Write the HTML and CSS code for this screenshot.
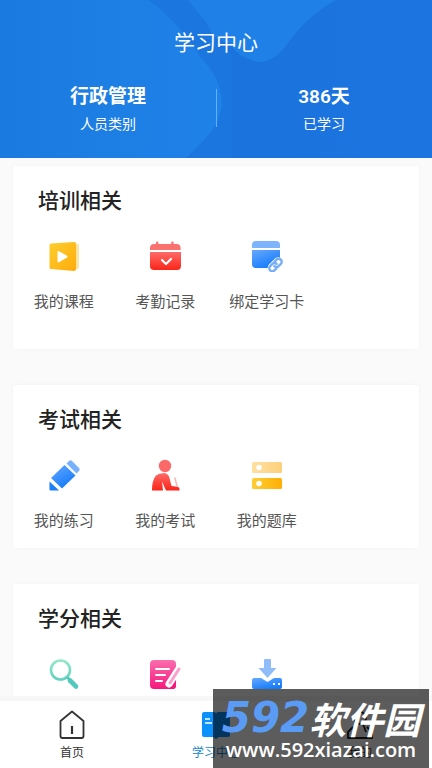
FILE: index.html
```html
<!DOCTYPE html>
<html lang="zh-CN">
<head>
<meta charset="utf-8">
<meta name="viewport" content="width=device-width, initial-scale=1">
<title>学习中心</title>
<link rel="stylesheet" href="styles.css">
</head>
<body>
<div class="app">
  <header class="hero">
    <svg class="hero-art" viewBox="0 0 432 158" preserveAspectRatio="none" aria-hidden="true">
      <defs>
        <linearGradient id="heroL" x1="0" x2="1"><stop offset="0" stop-color="#1b7ae0"/><stop offset="1" stop-color="#1f82e8"/></linearGradient>
        <linearGradient id="heroR" x1="0" x2="1"><stop offset="0" stop-color="#1a72dc"/><stop offset="1" stop-color="#1b74df"/></linearGradient>
      </defs>
      <path fill="url(#heroR)" d="M0 0h432v158H0z"/>
      <path fill="url(#heroL)" d="M0 0H150Q180 24 200 55Q222 76 222 106Q219 126 204 140L188 158H0z"/>
      <path fill="#1f80e7" d="M160 0H336Q308 15 288 43Q275 62 258 62Q240 59 230 44Q198 32 160 0z"/>
      <path fill="#1b76df" d="M148 0H188L206 22L218 45L232 55V158H186L204 140Q222 125 222 102Q220 76 200 57Q182 22 148 0z"/>
    </svg>
    <h1 class="hero-title">学习中心</h1>
    <div class="stats">
      <div class="stat"><strong class="stat-value">行政管理</strong><span class="stat-label">人员类别</span></div>
      <div class="stat"><strong class="stat-value">386天</strong><span class="stat-label">已学习</span></div>
    </div>
  </header>

  <main class="content">
    <section class="card card-tall">
      <h2 class="card-title">培训相关</h2>
      <div class="grid">
        <a class="entry" href="#">
          <svg class="icon" viewBox="0 0 32 32" aria-hidden="true">
            <defs><linearGradient id="gold" x1="0" y1="0" x2="1" y2="1"><stop offset="0" stop-color="#fdce30"/><stop offset="1" stop-color="#ffab0b"/></linearGradient></defs>
            <path fill="#ffe3a0" d="M26 3l4 1q1 .3 1 1.500V27q0 1.500-1 2l-4 1z"/>
            <path fill="url(#gold)" d="M3 3.500L26 2q2 0 2 2v25q0 2-2 2L3 29q-1.500 0-1.500-1.500V5Q1.500 3.500 3 3.500z"/>
            <path fill="#fff" stroke="#fff" stroke-width="2" stroke-linejoin="round" d="M10.500 12v9.500l8-4.800z"/>
          </svg>
          <span>我的课程</span>
        </a>
        <a class="entry" href="#">
          <svg class="icon" viewBox="0 0 32 32" aria-hidden="true">
            <defs><linearGradient id="red" x1="0" y1="0" x2="0" y2="1"><stop offset="0" stop-color="#ff6a68"/><stop offset="1" stop-color="#fb2519"/></linearGradient></defs>
            <path fill="#fb7170" d="M5 4h2V2.500q0-1 1.200-1t1.200 1V4h12.800V2.500q0-1 1.200-1t1.200 1V4h3q4 0 4 4v2H1V8q0-4 4-4z"/>
            <path fill="url(#red)" d="M1 12h31v14q0 4-4 4H5q-4 0-4-4z"/>
            <path fill="none" stroke="#fff" stroke-width="2.200" stroke-linecap="round" stroke-linejoin="round" d="M13 20l4 4 5-5"/>
          </svg>
          <span>考勤记录</span>
        </a>
        <a class="entry" href="#">
          <svg class="icon" viewBox="0 0 32 32" aria-hidden="true">
            <defs><linearGradient id="blue" x1="0" y1="0" x2=".6" y2="1"><stop offset="0" stop-color="#66a9ff"/><stop offset="1" stop-color="#147bfb"/></linearGradient></defs>
            <path fill="#7db4fb" d="M5 1h20q4 0 4 4v3H1V5q0-4 4-4z"/>
            <path fill="url(#blue)" d="M1 10h28v15q0 3-3 3H5q-4 0-4-4z"/>
            <g transform="rotate(-45 24.500 25)" fill="none">
              <rect x="17" y="21.500" width="15" height="7" rx="3.500" fill="#fff" stroke="#fff" stroke-width="3"/>
              <path stroke="#75adf7" stroke-width="2.400" stroke-linecap="round" d="M23 28h-3a3 3 0 0 1 0-6h3a3 3 0 0 1 3 3M26 22h3a3 3 0 0 1 0 6h-3a3 3 0 0 1-3-3"/>
            </g>
          </svg>
          <span>绑定学习卡</span>
        </a>
      </div>
    </section>

    <section class="card">
      <h2 class="card-title">考试相关</h2>
      <div class="grid">
        <a class="entry" href="#">
          <svg class="icon" viewBox="0 0 32 32" aria-hidden="true">
            <path fill="#79b2fc" d="M18.500 4.500L21 2q1.500-1.300 3 0l7 7q1.300 1.500 0 3l-2.500 2.500z"/>
            <path fill="url(#blue)" d="M16.500 6l11 10.500L14 29.500 3 19z"/>
            <path fill="#1b7efa" d="M1.500 22.500L11 31.500H2.500q-1 0-1-1z"/>
          </svg>
          <span>我的练习</span>
        </a>
        <a class="entry" href="#">
          <svg class="icon" viewBox="0 0 32 32" aria-hidden="true">
            <circle cx="16" cy="7" r="6.200" fill="#fb6a68"/>
            <path fill="url(#red)" d="M3 31.500Q3 21 7 16.500Q10 14 15 14q4.500.5 5.500 5l2 8 6 .700q2 .300 2 2v1.800H17l-4-9 1 9z"/>
            <path fill="none" stroke="#fbb5b2" stroke-width="1.500" stroke-linecap="round" d="M26 19l2 8"/>
          </svg>
          <span>我的考试</span>
        </a>
        <a class="entry" href="#">
          <svg class="icon" viewBox="0 0 32 32" aria-hidden="true">
            <defs>
              <linearGradient id="amber" x1="0" x2="1"><stop offset="0" stop-color="#fdce35"/><stop offset="1" stop-color="#feaf04"/></linearGradient>
              <linearGradient id="cream" x1="0" x2="1"><stop offset="0" stop-color="#fee0a0"/><stop offset="1" stop-color="#fdcf7c"/></linearGradient>
            </defs>
            <rect x="1" y="3" width="30" height="11" rx="1.500" fill="url(#cream)"/>
            <rect x="1" y="19" width="30" height="11" rx="1.500" fill="url(#amber)"/>
            <circle cx="8" cy="8.500" r="2.800" fill="#fff"/><circle cx="8" cy="24.500" r="2.800" fill="#fff"/>
          </svg>
          <span>我的题库</span>
        </a>
      </div>
    </section>

    <section class="card">
      <h2 class="card-title">学分相关</h2>
      <div class="grid">
        <a class="entry" href="#" aria-label="学分查询">
          <svg class="icon" viewBox="0 0 32 32" aria-hidden="true">
            <defs><linearGradient id="mint" x1="0" y1="0" x2="0" y2="1"><stop offset="0" stop-color="#91e8c9"/><stop offset="1" stop-color="#65d2bf"/></linearGradient></defs>
            <circle cx="12.500" cy="12" r="9.500" fill="none" stroke="url(#mint)" stroke-width="2.600"/>
            <path stroke="#51c9bb" stroke-width="2.500" d="M19 19l3 3"/>
            <path stroke="#51c9bb" stroke-width="4.600" stroke-linecap="round" d="M22 22.500l6 6"/>
          </svg>
        </a>
        <a class="entry" href="#" aria-label="学分申请">
          <svg class="icon" viewBox="0 0 32 32" aria-hidden="true">
            <defs><linearGradient id="pink" x1="0" y1="0" x2="0" y2="1"><stop offset="0" stop-color="#fb6daf"/><stop offset="1" stop-color="#f8177c"/></linearGradient></defs>
            <rect x="1" y="2" width="26" height="29" rx="4" fill="url(#pink)"/>
            <path stroke="#fff" stroke-width="2" stroke-linecap="round" d="M7 11h13M7 17h9M7 23h6"/>
            <path stroke="#fff" stroke-width="7" stroke-linecap="round" d="M29 12L20 26"/>
            <path stroke="#faa0cb" stroke-width="3" stroke-linecap="round" d="M30 11L21 25"/>
            <path fill="#f8177c" d="M27 23v5q0 2-2 3h-6l5-3z"/>
          </svg>
        </a>
        <a class="entry" href="#" aria-label="学分下载">
          <svg class="icon" viewBox="0 0 32 32" aria-hidden="true">
            <path fill="#8fbdfa" d="M13 2q0-1 1-1h5q1 0 1 1v8h5.500L16.500 20 7.500 10H13z"/>
            <path fill="url(#blue)" d="M3 20h7l6.500 4 6.500-4h6q2 0 2 2v7q0 2-2 2H3q-2 0-2-2v-7q0-2 2-2z"/>
            <path fill="#fff" d="M22 25h2v2h-2zM27 25h2v2h-2z"/>
          </svg>
        </a>
      </div>
    </section>
  </main>

  <nav class="tabs" aria-label="主导航">
    <a class="tab" href="#">
      <svg class="tab-icon" viewBox="0 0 30 30" aria-hidden="true"><path fill="none" stroke="#333" stroke-width="1.800" stroke-linejoin="round" d="M3.500 11L15 1.500l11.500 9.500v15q0 2-2 2h-19q-2 0-2-2z"/><path stroke="#333" stroke-width="2.200" d="M15 16v8"/></svg>
      <span>首页</span>
    </a>
    <a class="tab tab-active" href="#" aria-current="page">
      <svg class="tab-icon" viewBox="0 0 30 30" aria-hidden="true"><path fill="#0a91fb" d="M3 2h10q2 0 2 2 0-2 2-2h10q2 0 2 2v21q0 2-2 2H18l-3 2-3-2H3q-2 0-2-2V4q0-2 2-2z"/><path stroke="#fff" stroke-width="1.500" d="M4 9h5M4 13h7"/></svg>
      <span>学习中心</span>
    </a>
    <a class="tab" href="#">
      <svg class="tab-icon" viewBox="0 0 30 30" aria-hidden="true"><g fill="none" stroke="#222" stroke-width="1.800" stroke-linejoin="round"><circle cx="15" cy="8" r="6"/><path d="M8 17L3 22v6h24v-6l-5-5M12 14l-2 8M18 14l3 8"/></g></svg>
      <span>我的</span>
    </a>
  </nav>

  <aside class="watermark">
    <div class="brand"><span class="brand-num">592</span><span class="brand-name">软件园</span></div>
    <div class="brand-url">www.592xiazai.com</div>
  </aside>
</div>
</body>
</html>
```
FILE: styles.css
```css
* {
  box-sizing: border-box;
}

body {
  margin: 0;
  background: #fafafa;
  color: #222;
  font-family: Roboto, "Noto Sans CJK SC", sans-serif;
}

a {
  color: inherit;
  text-decoration: none;
}

.app {
  position: relative;
  display: flex;
  flex-direction: column;
  height: 100vh;
}

.hero {
  position: relative;
  flex: none;
  padding: 27px 0 23px;
  background: #1b76df;
  color: #fff;
  text-align: center;
}

.hero-art {
  position: absolute;
  inset: 0;
  width: 100%;
  height: 100%;
}

.hero-title {
  position: relative;
  margin: 0 0 24px;
  font-size: 21px;
  font-weight: 400;
  line-height: 32px;
}

.stats {
  position: relative;
  display: grid;
  grid-template-columns: 1fr 1fr;
}

.stats::before {
  content: "";
  position: absolute;
  top: 6px;
  bottom: 8px;
  left: 50%;
  width: 1px;
  background: #62b0f6;
}

.stat {
  display: flex;
  flex-direction: column;
  gap: 2px;
}

.stat-value {
  font-size: 19px;
  font-weight: 600;
  line-height: 28px;
}

.stat-label {
  font-size: 14px;
  line-height: 22px;
}

.content {
  flex: 1;
  min-height: 0;
  overflow-y: auto;
  scrollbar-width: none;
  display: flex;
  flex-direction: column;
  gap: 36px;
  padding: 8px 13px 0;
}

.card {
  flex: none;
  padding: 19px 0 16px;
  border-radius: 3px;
  background: #fff;
  box-shadow: 0 0 4px rgba(0, 0, 0, 0.03);
}

.card-tall {
  padding-bottom: 36px;
}

.card-title {
  margin: 0 0 23px;
  padding-left: 25px;
  font-size: 21px;
  font-weight: 500;
  line-height: 32px;
}

.grid {
  display: grid;
  grid-template-columns: repeat(4, 1fr);
}

.entry {
  display: flex;
  flex-direction: column;
  align-items: center;
  gap: 19px;
  color: #555;
  font-size: 15px;
  line-height: 22px;
  white-space: nowrap;
}

.icon {
  width: 32px;
  height: 32px;
}

.tabs {
  flex: none;
  display: grid;
  grid-template-columns: repeat(3, 1fr);
  padding: 9px 0 6px;
  border-top: 5px solid #f7f7f7;
  background: #fff;
}

.tab {
  display: flex;
  flex-direction: column;
  align-items: center;
  gap: 4px;
  color: #333;
  font-size: 12px;
  line-height: 18px;
}

.tab-active {
  color: #1485d0;
}

.tab-icon {
  width: 30px;
  height: 30px;
}

.watermark {
  position: absolute;
  right: 3px;
  bottom: 0;
  width: 216px;
  height: 79px;
  padding: 10px 4px 0;
  background: rgba(0, 0, 0, 0.64);
  color: #fff;
}

.brand {
  display: flex;
  align-items: center;
  justify-content: center;
  font-style: italic;
  font-weight: 700;
  line-height: 38px;
}

.brand-num {
  color: #599bf5;
  font-family: "DejaVu Sans", sans-serif;
  font-size: 42px;
}

.brand-name {
  font-family: "Noto Sans CJK SC", sans-serif;
  font-size: 37px;
}

.brand-url {
  font-family: "Open Sans", sans-serif;
  font-size: 20px;
  font-weight: 600;
  line-height: 26px;
  text-align: center;
}
```
